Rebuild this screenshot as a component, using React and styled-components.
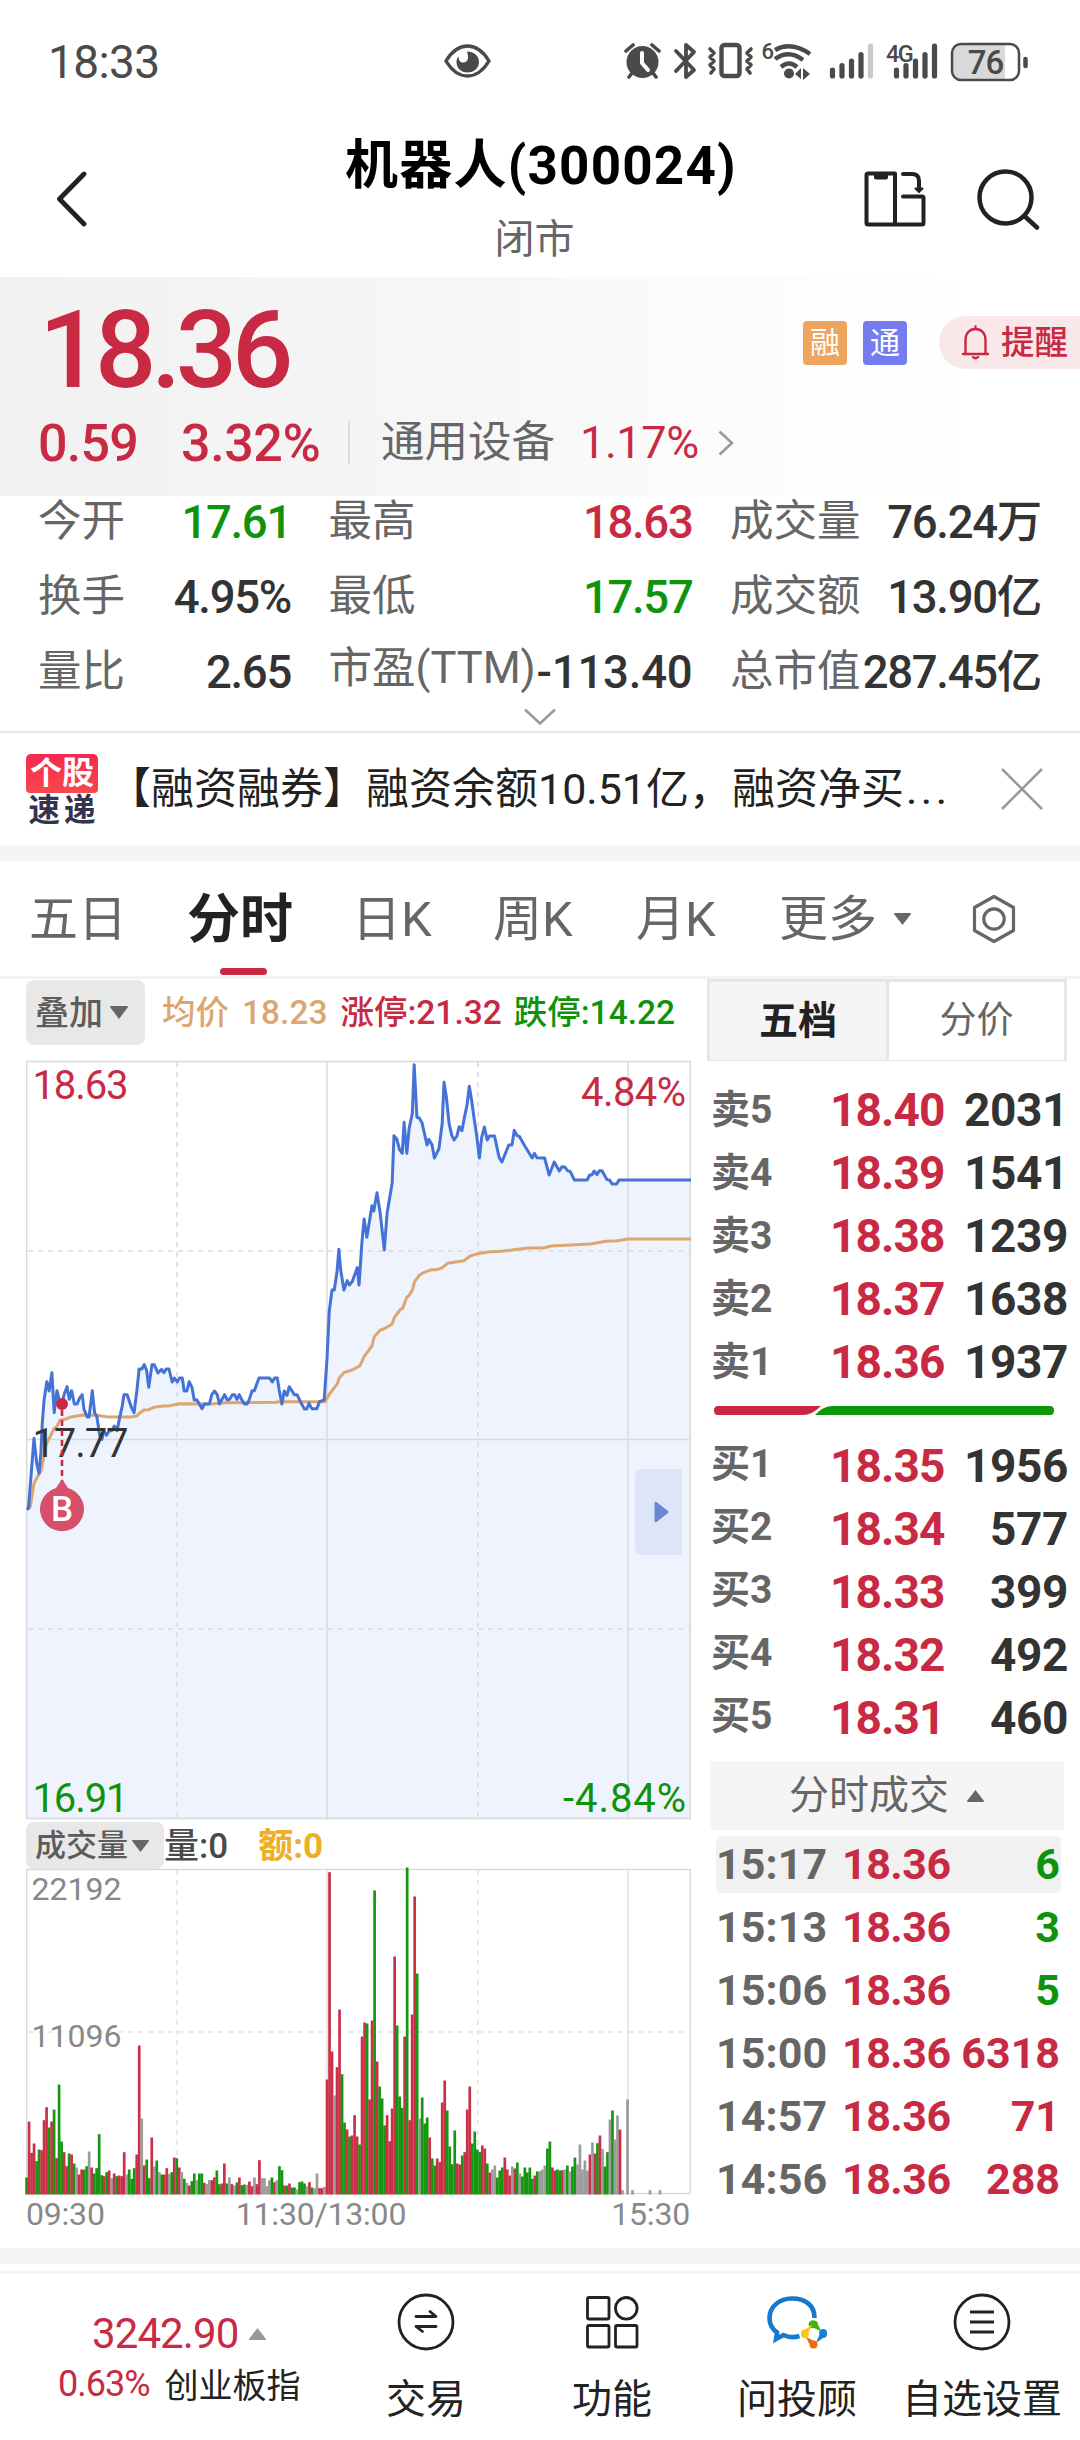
import React from "react";
import styled, { createGlobalStyle } from "styled-components";

const RED = "#c82a43";
const GREEN = "#0f930a";
const INK = "#333333";
const GREY = "#666666";
const FONT = 'Roboto, "Noto Sans CJK SC", sans-serif';

const GlobalStyle = createGlobalStyle`
  * { box-sizing: border-box; }
  body { margin: 0; background: #fff; font-family: ${FONT}; color: ${INK}; }
  svg { display: block; flex: none; }
`;

const Page = styled.main`
  width: 1080px;
  height: 2440px;
  overflow: hidden;
  background: #fff;
  display: flex;
  flex-direction: column;
`;

/* ---------- status bar ---------- */
const StatusBar = styled.div`
  height: 80px;
  padding: 41px 52px 0 48px;
  display: flex;
  align-items: center;
  color: #4a4a4a;
`;
const Clock = styled.span`
  width: 396px;
  font-size: 46px;
  line-height: 40px;
  letter-spacing: -0.6px;
  padding-top: 2px;
`;
const StatusIcons = styled.div`
  margin-left: auto;
  display: flex;
  align-items: center;
`;

/* ---------- header ---------- */
const Header = styled.header`
  height: 197px;
  display: grid;
  grid-template-columns: 1fr auto 1fr;
`;
const HeaderSide = styled.div`
  padding: 41px 40px 0 56px;
  display: flex;
  align-items: center;
  justify-content: ${(p) => (p.$end ? "flex-end" : "flex-start")};
  gap: 51px;
`;
const Titles = styled.div`
  display: flex;
  flex-direction: column;
  align-items: center;
`;
const Title = styled.h1`
  margin: 56px 0 0;
  padding-left: 2px;
  font-size: 53px;
  line-height: 60px;
  font-weight: 700;
  letter-spacing: 1.2px;
  color: #000;
  white-space: nowrap;
`;
const Subtitle = styled.div`
  margin: 15px 11px 0 0;
  font-size: 40px;
  line-height: 57px;
  color: ${GREY};
`;

/* ---------- quote ---------- */
const Quote = styled.section`
  height: 219px;
  background: linear-gradient(90deg, #f1f1f1 0%, #f6f6f6 40%, #fcfcfc 70%, #ffffff 90%);
`;
const QuoteTop = styled.div`
  height: 119px;
  padding: 16px 0 0 39px;
  display: flex;
  justify-content: space-between;
`;
const BigPrice = styled.div`
  font-size: 108px;
  line-height: 115px;
  font-weight: 500;
  letter-spacing: -5.3px;
  color: ${RED};
`;
const TagList = styled.div`
  height: 53px;
  margin-top: 23px;
  display: flex;
  align-items: center;
`;
const Tag = styled.span`
  width: 44px;
  height: 44px;
  margin-right: 16px;
  border-radius: 4px;
  background: ${(p) => p.$bg};
  color: #fff;
  font-size: 30px;
  line-height: 43px;
  text-align: center;
`;
const AlertPill = styled.div`
  width: 141px;
  height: 53px;
  margin-left: 16px;
  padding-left: 22px;
  border-radius: 27px 0 0 27px;
  background: #f9e8ea;
  color: ${RED};
  font-size: 33.5px;
  line-height: 50px;
  font-weight: 500;
  display: flex;
  align-items: center;
  gap: 11px;
  white-space: nowrap;
`;
const QuoteRow = styled.div`
  height: 93px;
  padding-left: 38px;
  display: flex;
  align-items: center;
`;
const Change = styled.span`
  width: ${(p) => p.$w}px;
  font-size: 52px;
  line-height: 60px;
  padding-top: 2px;
  font-weight: 500;
  letter-spacing: ${(p) => p.$ls}px;
  color: ${RED};
`;
const Rule = styled.i`
  width: 2px;
  height: 43px;
  margin: 0 31px 0 0;
  background: #dcdcdc;
`;
const Sector = styled.span`
  font-size: 43.5px;
  line-height: 60px;
  padding-top: 1px;
  color: ${GREY};
  width: 199px;
`;
const SectorChange = styled.span`
  font-size: 45px;
  line-height: 60px;
  letter-spacing: -0.4px;
  color: ${RED};
  width: 138px;
`;

/* ---------- stats ---------- */
const Stats = styled.section`
  height: 237px;
  border-bottom: 2px solid #e8e8e8;
`;
const StatGrid = styled.div`
  height: 212px;
  padding: 1px 40px 0 38px;
  display: grid;
  grid-template-columns: 253px 364px 311px;
  grid-auto-rows: 75px;
  column-gap: 37.5px;
  justify-content: start;
`;
const Stat = styled.div`
  height: 50px;
  display: flex;
  justify-content: space-between;
  white-space: nowrap;
`;
const StatLabel = styled.span`
  font-size: 43.5px;
  line-height: ${(p) => (p.$raised ? 43 : 50)}px;
  color: ${GREY};
  width: 0;
`;
const StatValue = styled.span`
  font-size: 45.5px;
  line-height: 51px;
  font-weight: 500;
  letter-spacing: ${(p) => (p.$loose ? -0.2 : -1.3)}px;
  color: ${(p) => p.$color || INK};
`;
const Expand = styled.div`
  display: flex;
  justify-content: center;
`;

/* ---------- news ---------- */
const News = styled.section`
  height: 112px;
  padding: 0 37px 0 26px;
  display: flex;
  align-items: center;
`;
const NewsBadge = styled.div`
  width: 72px;
  height: 72px;
  font-weight: 700;
  text-align: center;
  white-space: nowrap;
`;
const NewsBadgeTop = styled.div`
  height: 39px;
  margin-top: 1px;
  border-radius: 5px 5px 4px 4px;
  background: linear-gradient(180deg, #f52850, #f8484d);
  color: #fff;
  font-size: 32px;
  line-height: 38px;
`;
const NewsBadgeBottom = styled.div`
  font-size: 31.5px;
  line-height: 35px;
  letter-spacing: 4px;
  margin-right: -4px;
  color: #33344f;
`;
const NewsText = styled.p`
  flex: 1;
  margin: 1px 0 0 10px;
  font-size: 43px;
  line-height: 61px;
  color: #222;
  white-space: nowrap;
`;
const Dots = styled.span`
  letter-spacing: 3.5px;
  margin-left: 2px;
`;
const Band = styled.div`
  height: 16px;
  background: #f5f5f5;
`;

/* ---------- period tabs ---------- */
const Tabs = styled.nav`
  height: 118px;
  padding-left: 29px;
  border-bottom: 3px solid #f3f3f3;
  display: flex;
  white-space: nowrap;
`;
const Tab = styled.span`
  position: relative;
  width: ${(p) => p.$w}px;
  font-size: ${(p) => (p.$active ? 53 : 49)}px;
  line-height: 118px;
  font-weight: ${(p) => (p.$active ? 700 : 400)};
  color: ${(p) => (p.$active ? "#222" : GREY)};
  ${(p) =>
    p.$active &&
    `&::after {
      content: "";
      position: absolute;
      left: 33px;
      bottom: 1px;
      width: 47px;
      height: 7px;
      border-radius: 4px;
      background: ${RED};
    }`}
`;
const TabIcon = styled.span`
  display: flex;
  align-items: center;
  width: ${(p) => p.$w}px;
`;

/* ---------- market panel ---------- */
const Market = styled.section`
  height: 1269px;
  padding: 0 13px 0 26px;
  display: flex;
  justify-content: space-between;
`;
const ChartColumn = styled.div`
  width: 666px;
  padding-top: 1px;
`;
const ChartBar = styled.div`
  height: ${(p) => p.$h}px;
  display: flex;
  align-items: flex-start;
  white-space: nowrap;
`;
const Picker = styled.button`
  width: ${(p) => p.$w}px;
  height: ${(p) => p.$h}px;
  padding: 0 0 0 9px;
  border: 0;
  border-radius: 8px;
  background: #e8e8e8;
  color: #5c5c5c;
  font: 500 ${(p) => p.$size}px/40px ${FONT};
  display: flex;
  align-items: center;
  gap: ${(p) => p.$gap}px;
`;
const Legend = styled.span`
  margin-left: ${(p) => p.$ml}px;
  font-size: ${(p) => p.$size || 33.5}px;
  line-height: ${(p) => p.$lh || 65}px;
  font-weight: ${(p) => p.$weight || 500};
  color: ${(p) => p.$color};
`;
const ChartFrame = styled.div`
  height: ${(p) => p.$h}px;
  svg { overflow: visible; }
`;
const AxisRow = styled.div`
  height: 42px;
  width: 664px;
  display: grid;
  grid-template-columns: 145px 300px 1fr;
  text-align: center;
  font-size: 32px;
  line-height: 38px;
  letter-spacing: -0.2px;
  color: #888;
  span:first-child { text-align: left; }
  span:last-child { text-align: right; }
`;

/* ---------- order book ---------- */
const BookColumn = styled.div`
  width: 360px;
`;
const BookTabs = styled.div`
  height: 82px;
  border: 3px solid #e6e6e6;
  display: grid;
  grid-template-columns: 179px 1fr;
`;
const BookTab = styled.div`
  text-align: center;
  line-height: 78px;
  font-size: ${(p) => (p.$active ? 39 : 37)}px;
  font-weight: ${(p) => (p.$active ? 700 : 400)};
  color: ${(p) => (p.$active ? "#222" : GREY)};
  background: ${(p) => (p.$active ? "#f5f5f5" : "#fff")};
  border-right: ${(p) => (p.$active ? "3px solid #e6e6e6" : "0")};
`;
const Levels = styled.div`
  padding: ${(p) => p.$top}px 0 0 4px;
`;
const Level = styled.div`
  height: 63px;
  display: grid;
  grid-template-columns: 119px 1fr auto;
  line-height: 64px;
  font-weight: 700;
`;
const LevelName = styled.span`
  font-size: 39px;
  font-weight: 700;
  line-height: ${(p) => (p.$bid ? 61 : 64)}px;
  color: ${GREY};
`;
const LevelPrice = styled.span`
  font-size: 46px;
  letter-spacing: -0.9px;
  color: ${RED};
`;
const LevelQty = styled.span`
  font-size: 46px;
  letter-spacing: -0.4px;
  margin-right: -1px;
`;
const Ratio = styled.div`
  height: 9px;
  margin: 13px 0 0 7px;
`;
const TradesHead = styled.div`
  width: 354px;
  height: 69px;
  margin: 12px 0 6px 3px;
  padding-left: 79px;
  background: #f5f5f5;
  color: ${GREY};
  font-size: 40px;
  line-height: 68px;
  display: flex;
  align-items: center;
  gap: 18px;
`;
const Trade = styled.div`
  width: 345px;
  height: 57px;
  margin: 0 0 6px 9px;
  padding: 0 1px 0 0;
  border-radius: 6px;
  background: ${(p) => (p.$active ? "#f1f1f1" : "transparent")};
  display: grid;
  grid-template-columns: 126px 1fr auto;
  font-size: 43px;
  line-height: 57px;
  font-weight: 700;
  white-space: nowrap;
`;
const TradeTime = styled.span`
  color: ${GREY};
  letter-spacing: 0.1px;
`;
const TradePrice = styled.span`
  color: ${RED};
  width: 108px;
  letter-spacing: -0.5px;
`;
const TradeQty = styled.span`
  color: ${(p) => p.$color};
`;

/* ---------- bottom bar ---------- */
const BottomBar = styled.footer`
  height: 169px;
  margin-top: 7px;
  border-top: 3px solid #f5f5f5;
  display: flex;
`;
const IndexBox = styled.div`
  width: 333px;
  padding: 37px 0 0 58px;
`;
const IndexValue = styled.div`
  height: 46px;
  padding-left: 34px;
  display: flex;
  align-items: center;
  gap: 11px;
  font-size: 42px;
  line-height: 46px;
  letter-spacing: -0.9px;
  color: ${RED};
`;
const IndexLine = styled.div`
  margin-top: 2px;
  height: 50px;
  display: flex;
  align-items: center;
  font-size: 36px;
  letter-spacing: -1px;
  color: ${RED};
  white-space: nowrap;
`;
const IndexName = styled.span`
  margin: -2px 0 0 15px;
  font-size: 34px;
  letter-spacing: 0;
  color: #222;
`;
const Action = styled.div`
  width: ${(p) => p.$w}px;
  padding-top: 19px;
  display: flex;
  flex-direction: column;
  align-items: center;
  font-size: 40px;
  line-height: 56px;
  color: #222;
  white-space: nowrap;
  gap: 21px;
`;

/* ---------- data ---------- */
const stats = [
  ["今开", "17.61", GREEN], ["最高", "18.63", RED], ["成交量", "76.24万"],
  ["换手", "4.95%"], ["最低", "17.57", GREEN], ["成交额", "13.90亿"],
  ["量比", "2.65"], ["市盈(TTM)", "-113.40"], ["总市值", "287.45亿"],
];
const asks = [["卖5", "18.40", 2031], ["卖4", "18.39", 1541], ["卖3", "18.38", 1239], ["卖2", "18.37", 1638], ["卖1", "18.36", 1937]];
const bids = [["买1", "18.35", 1956], ["买2", "18.34", 577], ["买3", "18.33", 399], ["买4", "18.32", 492], ["买5", "18.31", 460]];
const trades = [["15:17", 6, GREEN], ["15:13", 3, GREEN], ["15:06", 5, GREEN], ["15:00", 6318, RED], ["14:57", 71, RED], ["14:56", 288, RED]];

const priceLine =
  "58,1408 62,1405 74,1195 80,1270 85,1300 89,1240 92,1150 96,1080 102,1025 107,1053 113,998 118,1118 124,1052 129,1080 135,1090 140,1062 146,1040 151,1078 156,1052 162,1092 168,1092 173,1075 179,1064 183,1108 190,1131 194,1131 201,1052 206,1118 211,1130 217,1185 222,1198 226,1172 232,1186 238,1172 243,1172 249,1158 255,1172 261,1130 266,1100 270,1064 277,1064 282,1085 287,1105 292,1118 298,1053 303,987 309,987 314,974 319,990 324,1042 331,974 336,974 344,999 352,988 357,998 362,987 368,987 375,1026 380,1014 386,1026 391,1014 397,1014 401,1053 407,1053 412,1025 418,1042 423,1080 429,1080 440,1106 445,1092 456,1092 461,1065 467,1053 473,1064 478,1092 489,1064 495,1080 500,1078 506,1064 511,1064 516,1078 521,1064 526,1078 532,1092 538,1092 543,1078 549,1052 554,1052 564,1014 587,1014 593,1026 598,1014 604,1014 608,1050 614,1092 619,1053 625,1066 630,1040 636,1053 641,1064 647,1064 656,1090 663,1107 668,1107 673,1090 679,1106 690,1106 696,1085 706,1080 708,1040 712,960 717,815 723,750 728,750 734,695 738,628 742,690 749,750 756,722 761,735 767,725 778,683 782,735 788,610 793,537 799,592 810,497 814,513 821,458 828,520 837,630 843,520 854,430 858,287 864,297 870,328 876,340 880,247 886,340 891,265 898,220 902,74 908,232 913,234 919,248 930,315 934,298 941,315 946,354 956,326 963,250 967,127 972,170 978,250 984,287 989,300 995,288 1000,260 1006,272 1011,235 1017,195 1022,139 1027,180 1033,240 1038,285 1044,354 1049,292 1055,261 1061,300 1066,288 1077,288 1087,352 1093,366 1108,315 1115,315 1120,271 1126,287 1131,289 1142,316 1159,354 1164,340 1169,353 1186,354 1196,405 1207,366 1218,393 1224,380 1230,381 1236,392 1242,395 1251,420 1279,420 1284,405 1289,405 1294,393 1300,404 1305,392 1311,392 1322,419 1328,421 1333,432 1343,432 1348,420 1505,420";
const averageLine =
  "62,1405 66,1400 74,1330 90,1290 100,1215 118,1165 124,1160 130,1141 142,1138 152,1132 180,1125 212,1126 234,1131 285,1131 298,1128 305,1118 314,1110 324,1109 335,1102 355,1098 370,1097 390,1091 460,1092 490,1088 600,1087 610,1085 708,1085 716,1065 735,1030 739,1013 750,997 767,990 784,977 793,950 810,918 815,890 828,870 836,867 854,852 859,832 871,810 877,805 886,771 890,768 898,750 903,725 913,706 924,697 940,689 952,689 962,684 975,670 1010,662 1024,648 1040,641 1062,636 1090,634 1150,624 1184,624 1200,618 1285,612 1320,604 1345,602 1366,597 1505,597";

/* one entry per minute: direction letter and the top of the bar, in thirds of a pixel */
const volumes =
  "g1104 r936 r1030 r1002 g1055 g1020 r1022 r932 r893 g954 r936 g900 r1046 g825 g996 r1028 r1070 g1032 r1035 g1062 n1074 r1095 r1080 g1080 g1070 n1026 r1074 g1092 g1076 g974 g1097 r1100 g1088 r1083 n1106 r1092 g1100 r1098 r1100 r1028 n1095 g1080 g1108 g1076 r1035 r708 n927 r1068 g1050 g1106 r984 n1071 g1053 n1088 g1095 r1095 r1076 n1093 g1088 r1044 g1046 r1074 n1088 g1108 n1120 r1128 g1115 g1092 n1112 g1092 g1092 r1120 n1124 n1112 r1112 r1104 g1083 g1124 r1122 r1062 g1122 n1104 r1124 n1128 g1119 r1104 g1127 g1125 n1126 r1116 r1130 n1104 r1124 r1052 n1106 n1106 n1130 n1112 g1104 r1118 n1112 g1070 g1082 r1128 g1128 r1122 g1134 g1134 n1140 g1118 g1116 g1122 n1130 r1118 g1134 n1137 n1092 r1136 r1136 n1132 r810 r188 r726 n858 r773 r600 g794 g939 r960 g981 r978 r917 r981 g1005 r681 r639 g642 r870 r633 g243 r756 g831 g867 g948 r917 r995 r897 r441 g648 g861 g895 r681 g174 r932 r615 r261 g492 n927 g864 g942 g924 r984 g1047 g1068 r1047 r1058 r879 r813 g903 g1011 g1064 g963 r1062 r1065 g1038 r1028 r900 r831 g1002 g966 g1020 g1028 r1008 r1017 g1062 r1089 n1080 n1068 g1104 g1083 g1074 r1044 r1080 r1098 n1071 r1077 g1059 n1092 g1101 g1074 g1089 g1074 g1108 r1098 g1086 n1085 n1080 n1068 g1017 g996 r1074 r1083 g1080 g1083 r1082 n1080 g1068 n1086 g1071 g1044 n1065 n1005 n1080 n1053 n1083 r1035 n999 r1032 g1001 r978 n1018 g1071 g1028 n930 g903 n990 n918 r960 n1142 n1152 n870 n1152 n1142 n1152 n1152 n1152 n1152 n1152 n1152 n1142 n1152 n1152 n1152 n1142".split(" ");
const barColor = { r: RED, g: "#109409", n: "#999999" };

/* ---------- drawings ---------- */
const Triangle = ({ up, w = 17, h = 12, fill = GREY }) => (
  <svg width={w} height={h} viewBox="0 0 17 12" preserveAspectRatio="none">
    <path d={up ? "M8.5 0L17 11q0 1-1 1H1q-1 0-1-1z" : "M8.5 12L17 1q0-1-1-1H1Q0 0 0 1z"} fill={fill} />
  </svg>
);

const Eye = () => (
  <svg width="47" height="34" viewBox="0 0 47 34" fill="none">
    <path d="M2 17C8 7 15 2 23.500 2S39 7 45 17C39 27 32 32 23.500 32S8 27 2 17z" stroke="#4a4a4a" strokeWidth="3.400" />
    <path d="M23 7.500c7 0 12 4.500 12 10.500s-5 10.500-11.500 10.500S12.500 24 12.500 18c0-2 .5-4 2-5.500 0 4 2 6 4.500 6 3 0 5-2 5-5 0-2.500-.5-4-1-6z" fill="#4a4a4a" />
  </svg>
);

const StatusGlyphs = () => (
  <svg width="404" height="56" viewBox="0 -8 404 56" fill="none" stroke="#4a4a4a" strokeWidth="3.600" strokeLinecap="round" strokeLinejoin="round">
    <circle cx="18.500" cy="21" r="16" fill="#4a4a4a" stroke="none" />
    <path d="M2 10l7-6M35 10l-7-6M5 36l3-4M32 36l-3-4" />
    <path d="M18 12v10l6 7" stroke="#fff" strokeWidth="4" />
    <path d="M52 10l18 19-8 7V4l8 7-18 19" strokeWidth="3.800" />
    <rect x="97.500" y="4" width="18" height="31" rx="3" strokeWidth="4.400" />
    <path d="M86 8l4 4-4 4 4 4-4 4 4 4-3 4M127 8l-4 4 4 4-4 4 4 4-4 4 3 4" strokeWidth="3.600" />
    <text x="137.500" y="18" fontSize="22" fontWeight="500" fill="#4a4a4a" stroke="none" fontFamily={FONT}>6</text>
    <path d="M151 9q16-9 35 4M151 18q14-10 28 1M157 26q8-7 16 0" strokeWidth="4.400" strokeLinecap="butt" />
    <circle cx="165" cy="32.500" r="5" fill="#4a4a4a" stroke="none" />
    <path d="M171 33l6-6v11zM179 27l7 6-7 6z" fill="#4a4a4a" stroke="none" />
    <path d="M208.500 29v6M218 24.500V35M227.500 20v15M237 13.500V35" strokeWidth="5.200" />
    <path d="M246.500 5v30" stroke="#c9c9c9" strokeWidth="5.200" />
    <text x="262" y="20.500" fontSize="23.500" fontWeight="500" letterSpacing="-1.500" fill="#4a4a4a" stroke="none" fontFamily={FONT}>4G</text>
    <path d="M272.500 29v6M282 24.500V35M291.500 20v15M301 13.500V35M310.500 5v30" strokeWidth="5.200" />
    <path d="M338 4h43v34h-43q-9 0-9-9V13q0-9 9-9z" fill="#d9d9d9" stroke="none" />
    <rect x="328" y="3" width="67" height="36" rx="9" strokeWidth="2.500" />
    <path d="M401.500 18v7" strokeWidth="4.500" />
    <text x="361.500" y="33" fontSize="33" fontWeight="500" textAnchor="middle" letterSpacing="-1" fill="#4a4a4a" stroke="none" fontFamily={FONT}>76</text>
  </svg>
);

const BackIcon = () => (
  <svg width="31" height="56" viewBox="0 0 31 56" fill="none" stroke="#222" strokeWidth="4.800" strokeLinecap="round" strokeLinejoin="round">
    <path d="M28 3L3.500 28 28 53" />
  </svg>
);
const SplitIcon = () => (
  <svg width="62" height="56" viewBox="0 0 62 56" fill="none" stroke="#222" strokeWidth="4" strokeLinecap="round" strokeLinejoin="round">
    <path d="M31 2.500H4Q2.500 2.500 2.500 4v48q0 1.500 1.500 1.500h54q1.500 0 1.500-1.500V27q0-1.500-1.500-1.500H39M31 2.500V53" />
    <path d="M12 4h10v2.500H12z" />
    <path d="M39 3h9q7 0 7 7v7" />
    <path d="M51.500 17.500h7L55 21z" fill="#222" strokeWidth="2" />
  </svg>
);
const SearchIcon = () => (
  <svg width="63" height="61" viewBox="0 0 63 61" fill="none" stroke="#222" strokeWidth="4.500" strokeLinecap="round">
    <circle cx="28.500" cy="28.500" r="26" />
    <path d="M48 47.500L60 58.500" />
  </svg>
);
const BellIcon = () => (
  <svg width="29" height="35" viewBox="0 0 29 35" fill="none" stroke={RED} strokeWidth="2.400" strokeLinecap="round" strokeLinejoin="round">
    <path d="M2 29h25M4.500 29V15c0-6.500 4-11 10-11s10 4.500 10 11v14M14.500 1.500V4M12 32q2.500 2.500 5 0" />
  </svg>
);
const HexIcon = () => (
  <svg width="46" height="50" viewBox="0 0 46 50" fill="none" stroke={GREY} strokeWidth="3.200" strokeLinejoin="round">
    <path d="M23 2.500L42.500 13.500v23L23 47.500 3.500 36.500v-23z" />
    <circle cx="23" cy="25" r="10.200" />
  </svg>
);

const PriceChart = () => (
  <svg width="666" height="760" viewBox="26 1060 666 760">
    <g transform="translate(0 1040) scale(0.45918 0.33333)">
      <polygon points={`${priceLine} 1505,2335 58,2335`} fill="#eef3fd" />
    </g>
    <g stroke="#dadbdf" strokeWidth="1.600" fill="none">
      <rect x="26.700" y="1061.500" width="663.500" height="757" />
      <path d="M327 1061v759M628 1061v759M26 1439.500h664" />
      <path d="M177 1062v756M478 1062v756" strokeDasharray="5 5" />
      <path d="M28 1251h662M28 1629h662" strokeDasharray="5 5" />
    </g>
    <g transform="translate(0 1040) scale(0.45918 0.33333)" fill="none" strokeLinejoin="round">
      <polyline points={averageLine} stroke="#dca671" strokeWidth="3" vectorEffect="non-scaling-stroke" />
      <polyline points={priceLine} stroke="#4472d6" strokeWidth="3" vectorEffect="non-scaling-stroke" />
    </g>
    <g fontFamily={FONT} fontSize="40">
      <text x="32.500" y="1099" fill={RED} textLength="96">18.63</text>
      <text x="686" y="1105.500" fill={RED} textAnchor="end" textLength="105">4.84%</text>
      <text x="32.500" y="1456.500" fill={INK} textLength="96">17.77</text>
      <text x="32.500" y="1812" fill={GREEN} textLength="96">16.91</text>
      <text x="686" y="1812" fill={GREEN} textAnchor="end" textLength="123">-4.84%</text>
    </g>
    <path d="M62 1410v76" stroke={RED} strokeWidth="2.600" strokeDasharray="6 4" />
    <circle cx="62" cy="1404" r="6" fill={RED} />
    <path d="M62 1479l6 9a22 22 0 1 1-12 0z" fill="#d65069" />
    <text x="62" y="1521" fontSize="35" fontWeight="500" fontFamily={FONT} fill="#fff" textAnchor="middle">B</text>
    <path d="M682 1469h-39q-8 0-8 8v70q0 8 8 8h39z" fill="#dce6f8" />
    <path d="M654.500 1503q0-2 2-1l11.500 9q1 1 0 2l-11.500 9q-2 1-2-1z" fill="#6b88d2" />
  </svg>
);

const VolumeChart = () => (
  <svg width="666" height="327" viewBox="26 1868 666 327">
    <g stroke="#e4e4e6" strokeWidth="1.700" fill="none">
      <rect x="26.700" y="1869.500" width="663.500" height="324" stroke="#d8d8da" strokeWidth="1.300" />
      <path d="M327 1868v326M628 1868v326" />
      <path d="M177 1870v324M478 1870v324M28 2032h662" strokeDasharray="5 5" />
    </g>
    <g fontFamily={FONT} fontSize="32" fill="#888">
      <text x="31.500" y="1900" textLength="90">22192</text>
      <text x="31.500" y="2047" textLength="90">11096</text>
    </g>
    {volumes.map((v, i) => {
      const h = (1155 - Number(v.slice(1))) / 3;
      return h > 1.5 ? (
        <rect key={i} x={25.200 + i * 2.504} y={2194.500 - h} width="2.700" height={h} fill={barColor[v[0]]} fillOpacity="0.97" />
      ) : null;
    })}
  </svg>
);

const TradeIcon = () => (
  <svg width="58" height="58" viewBox="0 0 58 58" fill="none" stroke="#222" strokeWidth="2.800" strokeLinecap="round">
    <circle cx="29" cy="29" r="27" />
    <path d="M19 23.500h20l-6-5M39 33.500H19l6.500 5" strokeLinejoin="round" />
  </svg>
);
const AppsIcon = () => (
  <svg width="58" height="58" viewBox="0 0 58 58" fill="none" stroke="#222" strokeWidth="2.800">
    <rect x="4.500" y="4.500" width="21.500" height="21.500" rx="1.500" />
    <circle cx="43.300" cy="15.300" r="10.800" />
    <rect x="4.500" y="32.500" width="21.500" height="21.500" rx="1.500" />
    <rect x="32.500" y="32.500" width="21.500" height="21.500" rx="1.500" />
  </svg>
);
const AdviserIcon = () => (
  <svg width="60" height="58" viewBox="0 0 60 58" fill="none">
    <path d="M47.500 25C47.500 12 38 5.500 25 5.500S2.500 14 2.500 25c0 6 2.500 11 7.500 14.500L9 46l7.500-4c4.500 2.200 11 2.500 16 1" stroke="#1878cc" strokeWidth="4.600" />
    <path d="M47 27.500a4 4 0 0 1 4 4l3.500 7-7.500-3.500a4 4 0 1 1 0-7.500z" fill="#3fb512" />
    <path d="M60 41a3.800 3.800 0 0 1-4 4l-7 5 3.500-8.500A4 4 0 1 1 60 41z" fill="#1480dc" />
    <path d="M46.500 55.500a4 4 0 0 1-4-4L39 44l7.500 3.500a4 4 0 1 1 0 8z" fill="#ec6a12" />
    <path d="M34 40.500a4 4 0 0 1 4-4l7.500-5-4 8a4 4 0 1 1-7.500 1z" fill="#f7c815" />
  </svg>
);
const MenuIcon = () => (
  <svg width="58" height="58" viewBox="0 0 58 58" fill="none" stroke="#222" strokeWidth="2.800">
    <circle cx="29" cy="29" r="27" />
    <path d="M17 19h24M17 29h24M17 39h24" strokeWidth="3.200" />
  </svg>
);

const LevelRow = ({ bid, row: [name, price, qty] }) => (
  <Level>
    <LevelName $bid={bid}>{name}</LevelName>
    <LevelPrice>{price}</LevelPrice>
    <LevelQty>{qty}</LevelQty>
  </Level>
);

export default function App() {
  return (
    <Page>
      <GlobalStyle />
      <StatusBar>
        <Clock>18:33</Clock>
        <Eye />
        <StatusIcons><StatusGlyphs /></StatusIcons>
      </StatusBar>

      <Header>
        <HeaderSide><BackIcon /></HeaderSide>
        <Titles>
          <Title>机器人(300024)</Title>
          <Subtitle>闭市</Subtitle>
        </Titles>
        <HeaderSide $end><SplitIcon /><SearchIcon /></HeaderSide>
      </Header>

      <Quote>
        <QuoteTop>
          <BigPrice>18.36</BigPrice>
          <TagList>
            <Tag $bg="#eda560">融</Tag>
            <Tag $bg="#747cf0">通</Tag>
            <AlertPill><BellIcon />提醒</AlertPill>
          </TagList>
        </QuoteTop>
        <QuoteRow>
          <Change $w={143} $ls={-0.8}>0.59</Change>
          <Change $w={167} $ls={-0.4}>3.32%</Change>
          <Rule />
          <Sector>通用设备</Sector>
          <SectorChange>1.17%</SectorChange>
          <svg width="16" height="26" viewBox="0 0 16 26" fill="none" stroke="#999" strokeWidth="2.500">
            <path d="M1.500 1.500L14 13 1.500 24.500" />
          </svg>
        </QuoteRow>
      </Quote>

      <Stats>
        <StatGrid>
          {stats.map(([label, value, color]) => (
            <Stat key={label}>
              <StatLabel $raised={label.includes("TTM")}>{label}</StatLabel>
              <StatValue $color={color} $loose={value[0] === "-"}>{value}</StatValue>
            </Stat>
          ))}
        </StatGrid>
        <Expand>
          <svg width="34" height="18" viewBox="0 0 34 18" fill="none" stroke="#999" strokeWidth="2.500">
            <path d="M2 1.500L17 15.500 32 1.500" />
          </svg>
        </Expand>
      </Stats>

      <News>
        <NewsBadge>
          <NewsBadgeTop>个股</NewsBadgeTop>
          <NewsBadgeBottom>速递</NewsBadgeBottom>
        </NewsBadge>
        <NewsText>【融资融券】融资余额10.51亿，融资净买<Dots>...</Dots></NewsText>
        <svg width="42" height="42" viewBox="0 0 42 42" stroke="#999" strokeWidth="2.500">
          <path d="M1 1l40 40M41 1L1 41" />
        </svg>
      </News>
      <Band />

      <Tabs>
        <Tab $w={158}>五日</Tab>
        <Tab $active $w={165}>分时</Tab>
        <Tab $w={141}>日K</Tab>
        <Tab $w={143}>周K</Tab>
        <Tab $w={143}>月K</Tab>
        <Tab $w={115}>更多</Tab>
        <TabIcon $w={77}><Triangle /></TabIcon>
        <TabIcon><HexIcon /></TabIcon>
      </Tabs>

      <Market>
        <ChartColumn>
          <ChartBar $h={80}>
            <Picker $w={119} $h={65} $size={34} $gap={7}>叠加<Triangle w={18} h={13} /></Picker>
            <Legend $ml={17} $color="#dca671">均价</Legend>
            <Legend $ml={13} $color="#dca671">18.23</Legend>
            <Legend $ml={13} $color={RED}>涨停:21.32</Legend>
            <Legend $ml={12} $color={GREEN}>跌停:14.22</Legend>
          </ChartBar>
          <ChartFrame $h={762}><PriceChart /></ChartFrame>
          <ChartBar $h={46}>
            <Picker $w={138} $h={47} $size={31} $gap={4}>成交量<Triangle /></Picker>
            <Legend $ml={0} $size={35} $lh={49} $weight={500} $color="#4a4a4a">量:0</Legend>
            <Legend $ml={30} $size={35} $lh={49} $weight={700} $color="#eeae26">额:0</Legend>
          </ChartBar>
          <ChartFrame $h={327}><VolumeChart /></ChartFrame>
          <AxisRow><span>09:30</span><span>11:30/13:00</span><span>15:30</span></AxisRow>
        </ChartColumn>

        <BookColumn>
          <BookTabs>
            <BookTab $active>五档</BookTab>
            <BookTab>分价</BookTab>
          </BookTabs>
          <Levels $top={17}>{asks.map((r) => <LevelRow key={r[0]} row={r} />)}</Levels>
          <Ratio>
            <svg width="341" height="9" viewBox="0 0 341 9">
              <path d="M4 0h103q-9 9-18 9H4Q0 9 0 4.500T4 0z" fill="#cb2640" />
              <path d="M101 9q8-9 18-9h217q4 0 4 4.500T336 9z" fill="#0c960a" />
            </svg>
          </Ratio>
          <Levels $top={19}>{bids.map((r) => <LevelRow key={r[0]} bid row={r} />)}</Levels>
          <TradesHead>分时成交<Triangle up /></TradesHead>
          {trades.map(([time, qty, color], i) => (
            <Trade key={time} $active={i === 0}>
              <TradeTime>{time}</TradeTime>
              <TradePrice>18.36</TradePrice>
              <TradeQty $color={color}>{qty}</TradeQty>
            </Trade>
          ))}
        </BookColumn>
      </Market>
      <Band />

      <BottomBar>
        <IndexBox>
          <IndexValue>3242.90<Triangle up fill="#999" /></IndexValue>
          <IndexLine>0.63%<IndexName>创业板指</IndexName></IndexLine>
        </IndexBox>
        <Action $w={186}><TradeIcon />交易</Action>
        <Action $w={186}><AppsIcon />功能</Action>
        <Action $w={184}><AdviserIcon />问投顾</Action>
        <Action $w={186}><MenuIcon />自选设置</Action>
      </BottomBar>
    </Page>
  );
}
